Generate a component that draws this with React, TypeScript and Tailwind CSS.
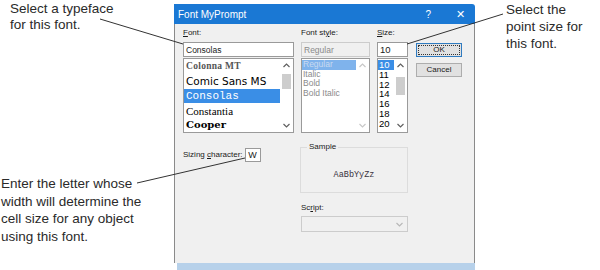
import React from "react";

const sans = { fontFamily: '"Liberation Sans", Arial, sans-serif' };

function ChevUp({ color = "#606060" }: { color?: string }) {
  return (
    <svg width="7" height="5" viewBox="0 0 7 5">
      <polyline points="0.5,4 3.5,1 6.5,4" fill="none" stroke={color} strokeWidth="1.2" />
    </svg>
  );
}
function ChevDown({ color = "#606060" }: { color?: string }) {
  return (
    <svg width="7" height="5" viewBox="0 0 7 5">
      <polyline points="0.5,1 3.5,4 6.5,1" fill="none" stroke={color} strokeWidth="1.2" />
    </svg>
  );
}

function ScrollBar({ thumbTop, thumbH, disabled }: { thumbTop?: number; thumbH?: number; disabled?: boolean }) {
  const c = disabled ? "#c8c8c8" : "#606060";
  return (
    <div className="relative w-[13px] h-full flex flex-col items-center justify-between py-[4px] bg-white">
      <ChevUp color={c} />
      {thumbH ? (
        <div
          className="absolute left-[2px] w-[9px] bg-[#cdcdcd]"
          style={{ top: thumbTop, height: thumbH }}
        />
      ) : null}
      <ChevDown color={c} />
    </div>
  );
}

export default function App() {
  return (
    <div className="relative w-[600px] h-[270px] bg-white overflow-hidden flex" style={sans}>
      {/* Left annotations */}
      <div className="w-[174px] shrink-0 flex flex-col text-[13.5px] leading-[16px] text-[#2a2a2a]">
        <div className="pl-[10px] pt-[1px]">
          Select a typeface
          <br />
          for this font.
        </div>
        <div className="mt-[142px] pl-[1px] leading-[17.5px]">
          Enter the letter whose
          <br />
          width will determine the
          <br />
          cell size for any object
          <br />
          using this font.
        </div>
      </div>

      {/* Dialog */}
      <div className="w-[301px] shrink-0 mt-[4px] flex flex-col">
        {/* Title bar */}
        <div className="h-[20px] bg-[#1a78d4] rounded-tr-[3px] flex items-center text-white text-[10px]">
          <span className="pl-[4px]">Font MyPrompt</span>
          <span className="ml-auto mr-[25px]">?</span>
          <span className="mr-[10px] text-[11px]">✕</span>
        </div>
        {/* Body */}
        <div className="h-[239px] bg-[#f0f0f0] border-l border-r border-[#8a8a8a] pl-[8px] pt-[4px] text-[8px] leading-[10px] text-[#1a1a1a]">
          {/* Top row */}
          <div className="flex">
            {/* Font column */}
            <div className="w-[111px] flex flex-col">
              <div className="h-[10px]">
                <span className="underline">F</span>ont:
              </div>
              <div className="mt-[4px] h-[15px] bg-white border border-[#9a9a9a] pl-[2px] flex items-center text-[8.5px]">
                Consolas
              </div>
              <div className="mt-[1px] h-[75px] bg-white border border-[#9a9a9a] flex">
                <div className="flex-1 flex flex-col text-black">
                  <div
                    className="h-[14px] flex items-center pl-[2px] text-[9.5px] font-bold tracking-[0.3px] text-[#555]"
                    style={{ fontFamily: '"Liberation Serif", serif' }}
                  >
                    Colonna MT
                  </div>
                  <div
                    className="h-[16px] flex items-center pl-[2px] text-[10.5px]"
                    style={{ fontFamily: '"Comic Sans MS", "DejaVu Sans", sans-serif' }}
                  >
                    Comic Sans MS
                  </div>
                  <div
                    className="h-[14px] flex items-center pl-[2px] text-[11px] bg-[#3a8ee6] text-white"
                    style={{ fontFamily: '"Liberation Mono", monospace' }}
                  >
                    Consolas
                  </div>
                  <div
                    className="h-[15px] flex items-center pl-[2px] text-[11px]"
                    style={{ fontFamily: '"Liberation Serif", serif' }}
                  >
                    Constantia
                  </div>
                  <div
                    className="h-[14px] flex items-center pl-[2px] text-[10px] font-bold"
                    style={{ fontFamily: '"DejaVu Serif", serif' }}
                  >
                    Cooper
                  </div>
                </div>
                <ScrollBar thumbTop={15} thumbH={15} />
              </div>
            </div>

            {/* Font style column */}
            <div className="ml-[7px] w-[69px] flex flex-col">
              <div className="h-[10px]">
                Font st<span className="underline">y</span>le:
              </div>
              <div className="mt-[4px] h-[15px] bg-[#f0f0f0] border border-[#cccccc] pl-[2px] flex items-center text-[#8a8a8a] text-[8.5px]">
                Regular
              </div>
              <div className="mt-[1px] h-[75px] bg-white border border-[#9a9a9a] flex">
                <div className="flex-1 flex flex-col pt-[1px] text-[#8a8a8a] text-[8.5px] leading-[9.7px]">
                  <div className="bg-[#7fb3ec] text-[#c9daf0] pl-[1px]">Regular</div>
                  <div className="pl-[1px]">Italic</div>
                  <div className="pl-[1px]">Bold</div>
                  <div className="pl-[1px]">Bold Italic</div>
                </div>
                <ScrollBar disabled />
              </div>
            </div>

            {/* Size column */}
            <div className="ml-[7px] w-[31px] flex flex-col">
              <div className="h-[10px]">
                <span className="underline">S</span>ize:
              </div>
              <div className="mt-[4px] h-[15px] bg-white border border-[#9a9a9a] pl-[2px] flex items-center text-[9.5px]">
                10
              </div>
              <div className="mt-[1px] h-[75px] bg-white border border-[#9a9a9a] flex">
                <div className="flex-1 flex flex-col pt-[1px] text-[9.5px] leading-[9.8px] text-black">
                  <div className="bg-[#3a8ee6] text-white pl-[1px]">10</div>
                  <div className="pl-[1px]">11</div>
                  <div className="pl-[1px]">12</div>
                  <div className="pl-[1px]">14</div>
                  <div className="pl-[1px]">16</div>
                  <div className="pl-[1px]">18</div>
                  <div className="pl-[1px]">20</div>
                </div>
                <ScrollBar thumbTop={18} thumbH={18} />
              </div>
            </div>

            {/* Buttons */}
            <div className="ml-[8px] w-[46px] flex flex-col pt-[15px]">
              <div className="h-[14px] bg-[#e1e1e1] border border-[#2f7bc0] p-[1px]">
                <div className="h-full border border-dotted border-[#333] flex items-center justify-center">
                  OK
                </div>
              </div>
              <div className="mt-[6px] h-[14px] bg-[#e1e1e1] border border-[#adadad] flex items-center justify-center">
                Cancel
              </div>
            </div>
          </div>

          {/* Bottom section */}
          <div className="flex">
            <div className="w-[117px] mt-[15px] flex items-center h-[14px]">
              <span>
                Sizing <span className="underline">c</span>haracter:
              </span>
              <div className="ml-[2px] w-[16px] h-[14px] bg-white border border-[#9a9a9a] flex items-center justify-center text-[9px]">
                W
              </div>
            </div>
            <div className="w-[108px] flex flex-col">
              <div className="mt-[14px] relative h-[46px] border border-[#dcdcdc] flex items-center justify-center pt-[10px]">
                <span className="absolute -top-[6px] left-[6px] px-[2px] bg-[#f0f0f0]">Sample</span>
                <span
                  className="text-[8.5px] text-[#3a3340]"
                  style={{ fontFamily: '"Liberation Mono", monospace' }}
                >
                  AaBbYyZz
                </span>
              </div>
              <div className="mt-[10px] pl-[1px] h-[10px]">
                Sc<span className="underline">r</span>ipt:
              </div>
              <div className="mt-[3px] ml-[1px] h-[16px] bg-[#f0f0f0] border border-[#cccccc] flex items-center justify-end pr-[4px]">
                <ChevDown color="#b8b8b8" />
              </div>
            </div>
          </div>
        </div>
        {/* Bottom strip */}
        <div className="h-[7px] ml-[3px] bg-[#b7d1ea]" />
      </div>

      {/* Right annotation */}
      <div className="pl-[31px] pt-[1px] text-[13.5px] leading-[17px] text-[#2a2a2a]">
        Select the
        <br />
        point size for
        <br />
        this font.
      </div>

      {/* Leader lines */}
      <svg className="absolute left-0 top-0 pointer-events-none" width="600" height="270">
        <line x1="100" y1="19" x2="183" y2="44" stroke="#333" strokeWidth="1" />
        <line x1="503" y1="14" x2="407" y2="44" stroke="#333" strokeWidth="1" />
        <line x1="137" y1="183" x2="245" y2="158" stroke="#333" strokeWidth="1" />
      </svg>
    </div>
  );
}
